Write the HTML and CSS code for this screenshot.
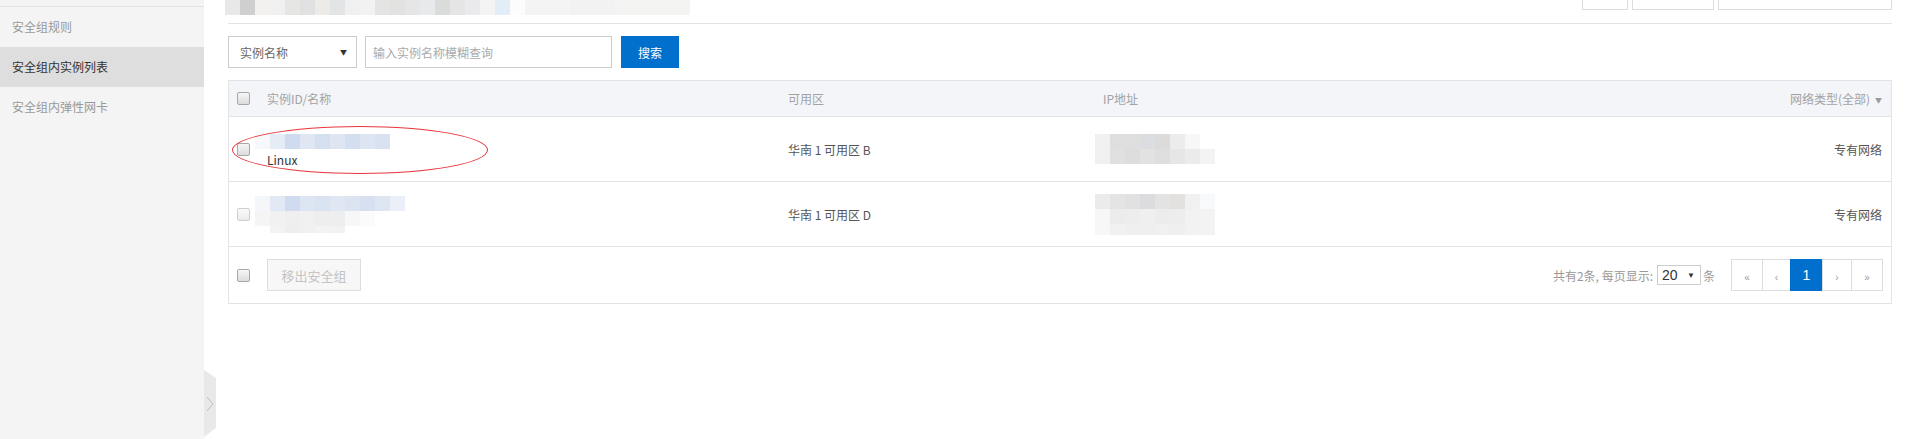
FILE: index.html
```html
<!DOCTYPE html>
<html lang="zh-CN">
<head>
<meta charset="utf-8">
<title>安全组内实例列表</title>
<link rel="stylesheet" href="styles.css">
</head>
<body>
<div class="app">
  <aside class="sidebar">
    <ul class="nav">
      <li class="nav-item">安全组规则</li>
      <li class="nav-item active">安全组内实例列表</li>
      <li class="nav-item">安全组内弹性网卡</li>
    </ul>
    <div class="collapse">
      <svg width="8" height="16" viewBox="0 0 8 16"><polyline points="1,1 7,8 1,15" fill="none" stroke="#bdbdbd" stroke-width="1"/></svg>
    </div>
  </aside>
  <main class="main">
    <div class="topbar">
      <div class="mosaic title-mosaic"></div>
      <div class="top-actions">
        <span class="tbtn tbtn-a"></span>
        <span class="tbtn tbtn-b"></span>
        <span class="tbtn tbtn-c"></span>
      </div>
    </div>
    <div class="search">
      <div class="select"><span>实例名称</span><span class="caret">▼</span></div>
      <div class="input">输入实例名称模糊查询</div>
      <button class="btn-primary">搜索</button>
    </div>
    <div class="table">
      <div class="tr thead">
        <div class="td chk"><span class="checkbox"></span></div>
        <div class="td">实例ID/名称</div>
        <div class="td">可用区</div>
        <div class="td">IP地址</div>
        <div class="td type">网络类型(全部)<span class="arrow">▼</span></div>
      </div>
      <div class="tr row">
        <div class="td chk"><span class="checkbox"></span></div>
        <div class="td name name-first">
          <div class="mosaic id-mosaic-1"></div>
          <div class="os">Linux</div>
        </div>
        <div class="td">华南 1 可用区 B</div>
        <div class="td"><div class="mosaic ip-mosaic-1"></div></div>
        <div class="td type">专有网络</div>
        <span class="annot"></span>
      </div>
      <div class="tr row">
        <div class="td chk"><span class="checkbox faded"></span></div>
        <div class="td name">
          <div class="mosaic id-mosaic-2"></div>
        </div>
        <div class="td">华南 1 可用区 D</div>
        <div class="td"><div class="mosaic ip-mosaic-2"></div></div>
        <div class="td type">专有网络</div>
      </div>
      <div class="tfoot">
        <div class="chk"><span class="checkbox"></span></div>
        <button class="btn-disabled">移出安全组</button>
        <div class="pager-info">
          <span>共有2条, 每页显示:</span>
          <span class="page-size"><span>20</span><span class="ps-caret">▼</span></span>
          <span>条</span>
        </div>
        <div class="pages">
          <span class="page p-first">«</span>
          <span class="page p-prev">‹</span>
          <span class="page active">1</span>
          <span class="page p-next">›</span>
          <span class="page p-last">»</span>
        </div>
      </div>
    </div>
  </main>
</div>
</body>
</html>
```

FILE: styles.css
```css
* { box-sizing: border-box; margin: 0; padding: 0; }
html, body { width: 1916px; height: 439px; overflow: hidden; background: #fff; }
body {
  font-family: "Noto Sans CJK SC", "Microsoft YaHei", sans-serif;
  font-size: 12px;
  color: #555;
}
.app { display: flex; height: 439px; }

/* sidebar */
.sidebar {
  position: relative;
  width: 204px;
  flex: none;
  background: #f4f4f4;
  padding-top: 6px;
}
.nav { list-style: none; border-top: 1px solid #e4e4e4; }
.nav-item { height: 40px; line-height: 40px; padding-left: 12px; color: #999; }
.nav-item.active { background: #dedede; color: #333; }
.collapse {
  position: absolute;
  left: 204px;
  top: 370px;
  width: 12px;
  height: 67px;
  background: #e9e9e9;
  clip-path: polygon(0 0, 100% 8px, 100% calc(100% - 9px), 0 100%);
  display: flex;
  align-items: center;
  justify-content: center;
}

/* main */
.main { flex: 1; min-width: 0; padding: 0 24px; }
.topbar {
  height: 24px;
  border-bottom: 1px solid #e3e3e3;
  display: flex;
  justify-content: space-between;
  align-items: flex-start;
}
.mosaic { flex: none; }
.title-mosaic {
  margin-left: -3px;
  width: 465px;
  height: 15px;
  background: linear-gradient(90deg,
    #e8e8e8 0 15px, #cfcfcf 15px 30px, #f2f1ef 30px 45px, #f0f0f0 45px 60px,
    #e6e6e4 60px 75px, #e1e1e1 75px 90px, #ecebe8 90px 105px, #e3e4e6 105px 120px,
    #f0f0f0 120px 135px, #f2f2f2 135px 150px, #e4e4e4 150px 165px, #e2e2e0 165px 180px,
    #e6e6e6 180px 195px, #e8e9ea 195px 210px, #dadcda 210px 225px, #e5e5e5 225px 240px,
    #eaeaec 240px 255px, #f4f4f4 255px 270px, #e2edf8 270px 285px, #fcfcfc 285px 300px,
    #f4f4f4 300px 345px, #f2f2f2 345px 390px, #f4f4f2 390px 465px);
}
.top-actions { display: flex; gap: 4px; }
.tbtn { display: block; height: 10px; border: 1px solid #ddd; border-top: 0; background: #fff; }
.tbtn-a { width: 46px; }
.tbtn-b { width: 82px; }
.tbtn-c { width: 174px; }

/* search */
.search { display: flex; margin-top: 12px; height: 32px; }
.select {
  width: 129px;
  border: 1px solid #ccc;
  display: flex;
  align-items: center;
  justify-content: space-between;
  padding: 0 9px 0 11px;
  color: #666;
}
.caret { font-size: 7px; color: #333; }
.input {
  width: 247px;
  margin-left: 8px;
  border: 1px solid #ccc;
  padding-left: 7px;
  color: #aaa;
  display: flex;
  align-items: center;
}
.btn-primary {
  width: 58px;
  margin-left: 9px;
  border: 0;
  background: #0070cc;
  color: #fff;
  font: inherit;
  font-size: 12px;
}

/* table */
.table { margin-top: 12px; border: 1px solid #e1e3e6; }
.tr {
  display: grid;
  grid-template-columns: 38px 521px 315px 1fr auto;
  align-items: center;
}
.thead {
  height: 36px;
  background: #f3f5f8;
  border-bottom: 1px solid #e1e6eb;
  color: #a3a3a3;
}
.row { position: relative; height: 65px; border-bottom: 1px solid #e3e3e3; }
.chk { padding-left: 8px; }
.checkbox {
  display: block;
  width: 13px;
  height: 13px;
  border: 1px solid #a8a8a8;
  border-radius: 2px;
  background: linear-gradient(#f6f6f6, #dcdcdc);
}
.checkbox.faded { opacity: 0.55; }
.type { text-align: right; padding-right: 9px; }
.arrow { font-size: 7px; color: #999; margin-left: 5px; vertical-align: 1px; }

.name { display: flex; flex-direction: column; align-items: flex-start; }
.name-first { padding-top: 5px; }
.os { color: #333; line-height: 18px; margin-top: 2px; }

.id-mosaic-1 {
  margin-left: -12px;
  width: 135px;
  height: 15px;
  background: linear-gradient(90deg,
    #f7f8fa 0 15px, #e6ecf5 15px 30px, #cfdcef 30px 45px, #e0e7f3 45px 60px,
    #d4e0f0 60px 75px, #dfe6f2 75px 90px, #d3dff0 90px 105px, #dde5f2 105px 120px,
    #d8e2f1 120px 135px);
}
.id-mosaic-2 {
  margin-left: -12px;
  width: 150px;
  height: 37px;
  background:
    linear-gradient(90deg,
      #f4f6f9 0 15px, #e2e9f4 15px 30px, #cfdcef 30px 45px, #dde5f2 45px 60px,
      #d9e3f1 60px 75px, #e0e7f3 75px 90px, #dce4f2 90px 105px, #d6e0f0 105px 120px,
      #dee6f2 120px 135px, #ebf0f8 135px 150px) 0 0 / 150px 15px no-repeat,
    linear-gradient(90deg,
      #f5f5f5 0 15px, #f1f1f1 15px 30px, #efefef 30px 45px, #f0f0f0 45px 60px,
      #eeeeee 60px 75px, #eeeeee 75px 90px, #f6f7f8 90px 105px, #fbfbfb 105px 120px,
      transparent 120px) 0 15px / 150px 15px no-repeat,
    linear-gradient(90deg,
      transparent 0 15px, #f3f3f3 15px 30px, #eeeeee 30px 45px, #f0f0f0 45px 60px,
      #f3f3f3 60px 75px, #f2f2f2 75px 90px, transparent 90px) 0 30px / 150px 7px no-repeat;
}
.ip-mosaic-1 {
  margin-left: -8px;
  width: 120px;
  height: 30px;
  background:
    linear-gradient(90deg,
      #f0f0f0 0 15px, #dedede 15px 30px, #dedede 30px 45px, #dcdde0 45px 60px,
      #dcdbd9 60px 75px, #ececec 75px 90px, #f7f7f7 90px 105px, transparent 105px) 0 0 / 120px 15px no-repeat,
    linear-gradient(90deg,
      #f0f0f0 0 15px, #e0e0e0 15px 30px, #dddddd 30px 45px, #e2e2e2 45px 60px,
      #dedede 60px 75px, #e6e6e6 75px 90px, #ebebeb 90px 105px, #f3f3f3 105px 120px) 0 15px / 120px 15px no-repeat;
}
.ip-mosaic-2 {
  margin-left: -8px;
  width: 120px;
  height: 41px;
  background:
    linear-gradient(90deg,
      #ebebeb 0 15px, #e4e4e4 15px 30px, #e1e1e1 30px 45px, #dcdcdf 45px 60px,
      #e3e3e3 60px 75px, #e2e1df 75px 90px, #f0f0f0 90px 105px, #f8f9fb 105px 120px) 0 0 / 120px 15px no-repeat,
    linear-gradient(90deg,
      #f7f7f7 0 15px, #ececec 15px 30px, #ededed 30px 45px, #efefef 45px 60px,
      #ececec 60px 75px, #ededed 75px 90px, #f2f2f2 90px 105px, #f3f3f3 105px 120px) 0 15px / 120px 15px no-repeat,
    linear-gradient(90deg,
      #f7f7f7 0 15px, #f1f1f1 15px 30px, #efefef 30px 45px, #efefef 45px 60px,
      #f0f0f0 60px 75px, #efefef 75px 90px, #f2f2f2 90px 105px, #f3f3f3 105px 120px) 0 30px / 120px 11px no-repeat;
}
.annot {
  position: absolute;
  left: 3px;
  top: 9px;
  width: 256px;
  height: 48px;
  border: 1.5px solid #e8383d;
  border-radius: 50%;
  pointer-events: none;
}

/* footer */
.tfoot { height: 56px; display: flex; align-items: center; }
.tfoot .chk { width: 38px; flex: none; }
.btn-disabled {
  width: 94px;
  height: 32px;
  border: 1px solid #ddd;
  background: #f7f7f7;
  color: #c4c4c4;
  font: inherit;
  font-size: 13px;
}
.pager-info { margin-left: auto; display: flex; align-items: center; color: #999; }
.page-size {
  width: 44px;
  height: 20px;
  margin: 0 2px 0 4px;
  border: 1px solid #ccc;
  display: flex;
  align-items: center;
  justify-content: space-between;
  padding: 0 5px 0 4px;
  color: #333;
  font-family: "Liberation Sans", Arial, sans-serif;
  font-size: 14px;
}
.ps-caret { font-size: 8px; }
.pages { display: flex; height: 32px; margin-left: 17px; margin-right: 8px; }
.page {
  display: flex;
  align-items: center;
  justify-content: center;
  padding-top: 4px;
  border: 1px solid #ddd;
  margin-left: -1px;
  color: #999;
  font-size: 10px;
  font-family: "Liberation Sans", Arial, sans-serif;
}
.p-first { width: 32px; }
.p-prev { width: 29px; }
.page.active {
  width: 33px;
  padding-top: 0;
  background: #0070cc;
  border-color: #0070cc;
  color: #fff;
  font-size: 14px;
}
.p-next { width: 30px; }
.p-last { width: 32px; }
```
